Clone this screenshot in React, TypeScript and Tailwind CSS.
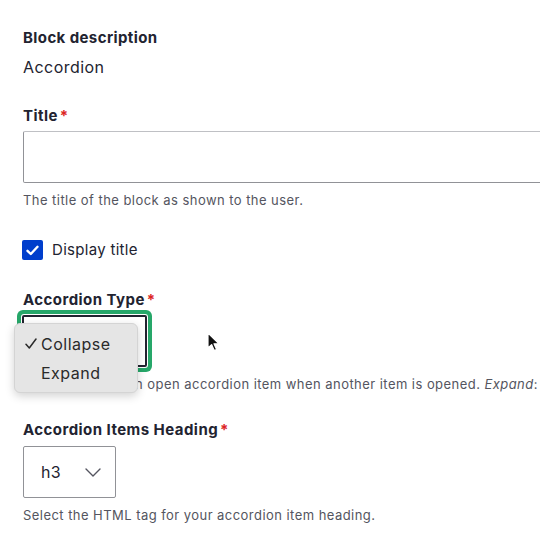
import { useState } from "react";

// Claro-style block form, with the accordion type select open
export default function App() {
  const [displayTitle] = useState(true);

  return (
    <div className="relative w-[540px] h-[541px] overflow-hidden bg-white pl-[23px] pt-[28px] font-['Inter','Liberation_Sans',sans-serif] text-[#222330]">
      <div className="text-[15px] leading-[20px] font-bold tracking-[0.4px]">Block description</div>
      <div className="mt-[7px] text-[16px] leading-[24px] tracking-[0.45px]">Accordion</div>

      <Label text="Title" className="mt-[27px]" />
      <div className="mt-[5px] h-[52px] w-[560px] rounded-[2px] border border-[#919297] border-t-[#bfc0c4] bg-white" />
      <Help className="mt-[8px]">The title of the block as shown to the user.</Help>

      <div className="mt-[31px] flex items-center gap-[9px]">
        <div className="-ml-px flex h-[20px] w-[21px] items-center justify-center rounded-[2px] bg-[#003ecc]">
          {displayTitle && (
            <svg width="13" height="11" viewBox="0 0 13 11" fill="none">
              <path d="M1.5 5.8 L4.8 9 L11.5 1.8" stroke="white" strokeWidth="2.4" strokeLinecap="round" strokeLinejoin="round" />
            </svg>
          )}
        </div>
        <span className="text-[15px] leading-[20px] tracking-[0.3px]">Display title</span>
      </div>

      <Label text="Accordion Type" className="mt-[30px]" />
      <div className="relative mt-[5px] h-[52px] w-[125px] -ml-px rounded-[2px] border-2 border-[#222330] bg-white shadow-[0_0_0_1px_#fff,0_0_0_5px_#26a769]">
        <div className="absolute left-[-10px] top-[6px] z-10 w-[124px] rounded-[6px] border border-[#d4d4d4] bg-[#e5e5e5] py-[5px] shadow-[0_3px_10px_rgba(0,0,0,0.18)]">
          <div className="flex h-[29px] items-center text-[16px] tracking-[0.5px] text-[#2a2a2a]">
            <span className="flex w-[26px] pl-[10px]">
              <svg width="12" height="11" viewBox="0 0 12 11" fill="none">
                <path d="M1 6.2 L4.3 10 L11 1" stroke="#2a2a2a" strokeWidth="1.5" strokeLinecap="round" strokeLinejoin="round" />
              </svg>
            </span>
            <span>Collapse</span>
          </div>
          <div className="flex h-[29px] items-center text-[16px] tracking-[0.5px] text-[#2a2a2a]">
            <span className="w-[26px]" />
            <span>Expand</span>
          </div>
        </div>
      </div>
      <Help className="mt-[8px] whitespace-nowrap">
        Collapse: close an open accordion item when another item is opened. <em>Expand</em>: keep all items open.
      </Help>

      <Label text="Accordion Items Heading" className="mt-[27px]" />
      <div className="mt-[6px] flex h-[52px] w-[93px] items-center rounded-[2px] border border-[#919297] bg-white pl-[17px]">
        <span className="text-[16px] leading-[24px] tracking-[0.3px]">h3</span>
        <svg className="ml-[24px]" width="16" height="9" viewBox="0 0 16 9" fill="none">
          <path d="M1 1 L8 8 L15 1" stroke="#545560" strokeWidth="1.4" strokeLinecap="round" strokeLinejoin="round" />
        </svg>
      </div>
      <Help className="mt-[8px]">Select the HTML tag for your accordion item heading.</Help>

      {/* mouse pointer */}
      <svg className="absolute left-[207px] top-[332px]" width="13" height="21" viewBox="0 0 13 21">
        <path d="M1 1 L1 16 L4.6 12.6 L7.2 18.6 L9.6 17.6 L7 11.8 L12 11.8 Z" fill="#111" stroke="#fff" strokeWidth="1.2" strokeLinejoin="round" />
      </svg>
    </div>
  );
}

function Label({ text, className }: { text: string; className?: string }) {
  return (
    <div className={`text-[15px] leading-[20px] font-bold tracking-[0.45px] ${className ?? ""}`}>
      {text}
      <span className="ml-[2px] text-[#dc2323]">*</span>
    </div>
  );
}

function Help({ children, className }: { children: React.ReactNode; className?: string }) {
  return <div className={`text-[13px] leading-[18px] tracking-[0.45px] text-[#545560] ${className ?? ""}`}>{children}</div>;
}
